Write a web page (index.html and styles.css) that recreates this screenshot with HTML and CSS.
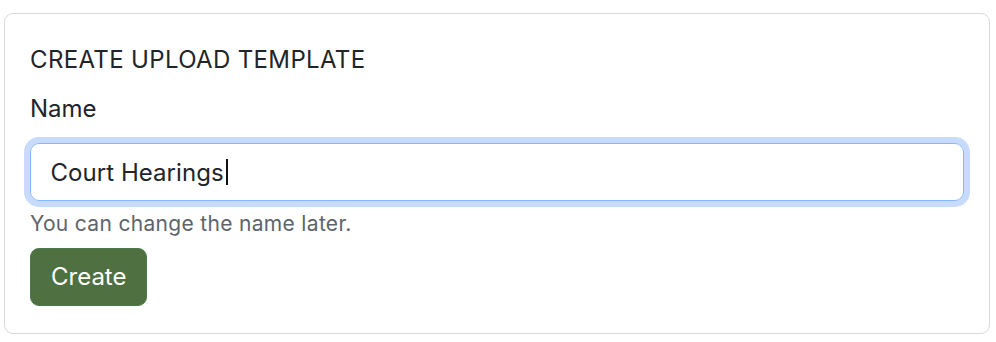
FILE: index.html
```html
<!DOCTYPE html>
<html lang="en">
<head>
<meta charset="utf-8">
<title>Create upload template</title>
<link rel="stylesheet" href="styles.css">
</head>
<body>
<div class="card">
  <h5 class="card-title">CREATE UPLOAD TEMPLATE</h5>
  <label class="form-label" for="name">Name</label>
  <div class="form-control" id="name" role="textbox"><span class="value">Court Hearings</span><span class="caret"></span></div>
  <div class="form-text">You can change the name later.</div>
  <button class="btn-create" type="button">Create</button>
</div>
</body>
</html>
```
FILE: styles.css
```css
html, body {
  margin: 0;
  background: #ffffff;
}
body {
  padding: 13px 6px 0 4px;
  font-family: Inter, "Noto Sans", "Liberation Sans", sans-serif;
  color: #212529;
}
.card {
  border: 1px solid #d9d9d9;
  border-radius: 9px;
  padding: 28px 25px 26px 25px;
  height: 321px;
  box-sizing: border-box;
  display: flex;
  flex-direction: column;
  align-items: flex-start;
}
.card-title {
  margin: 0;
  font-size: 24px;
  font-weight: 400;
  line-height: 36px;
  height: 36px;
  letter-spacing: 0.35px;
}
.form-label {
  margin-top: 13px;
  font-size: 24px;
  line-height: 36px;
}
.form-control {
  margin-top: 16px;
  align-self: stretch;
  height: 58px;
  flex: none;
  box-sizing: border-box;
  border: 1.5px solid #86b7fe;
  border-radius: 9px;
  box-shadow: 0 0 0 6px #c8dbfd;
  padding: 0 19.5px;
  display: flex;
  align-items: center;
  font-size: 24px;
  color: #212529;
}
.value {
  letter-spacing: 0.05px;
}
.caret {
  display: inline-block;
  width: 2px;
  height: 26px;
  background: #111;
  margin-left: 2px;
}
.form-text {
  margin-top: 7px;
  font-size: 21px;
  line-height: 31.5px;
  color: #5e646b;
  letter-spacing: 0.32px;
}
.btn-create {
  margin-top: 8px;
  height: 58px;
  flex: none;
  padding: 0 20px;
  border: 1.5px solid #4b7a4c;
  border-radius: 9px;
  background: #4f7040;
  color: #ffffff;
  font-family: inherit;
  font-size: 24px;
  line-height: 36px;
}
```
